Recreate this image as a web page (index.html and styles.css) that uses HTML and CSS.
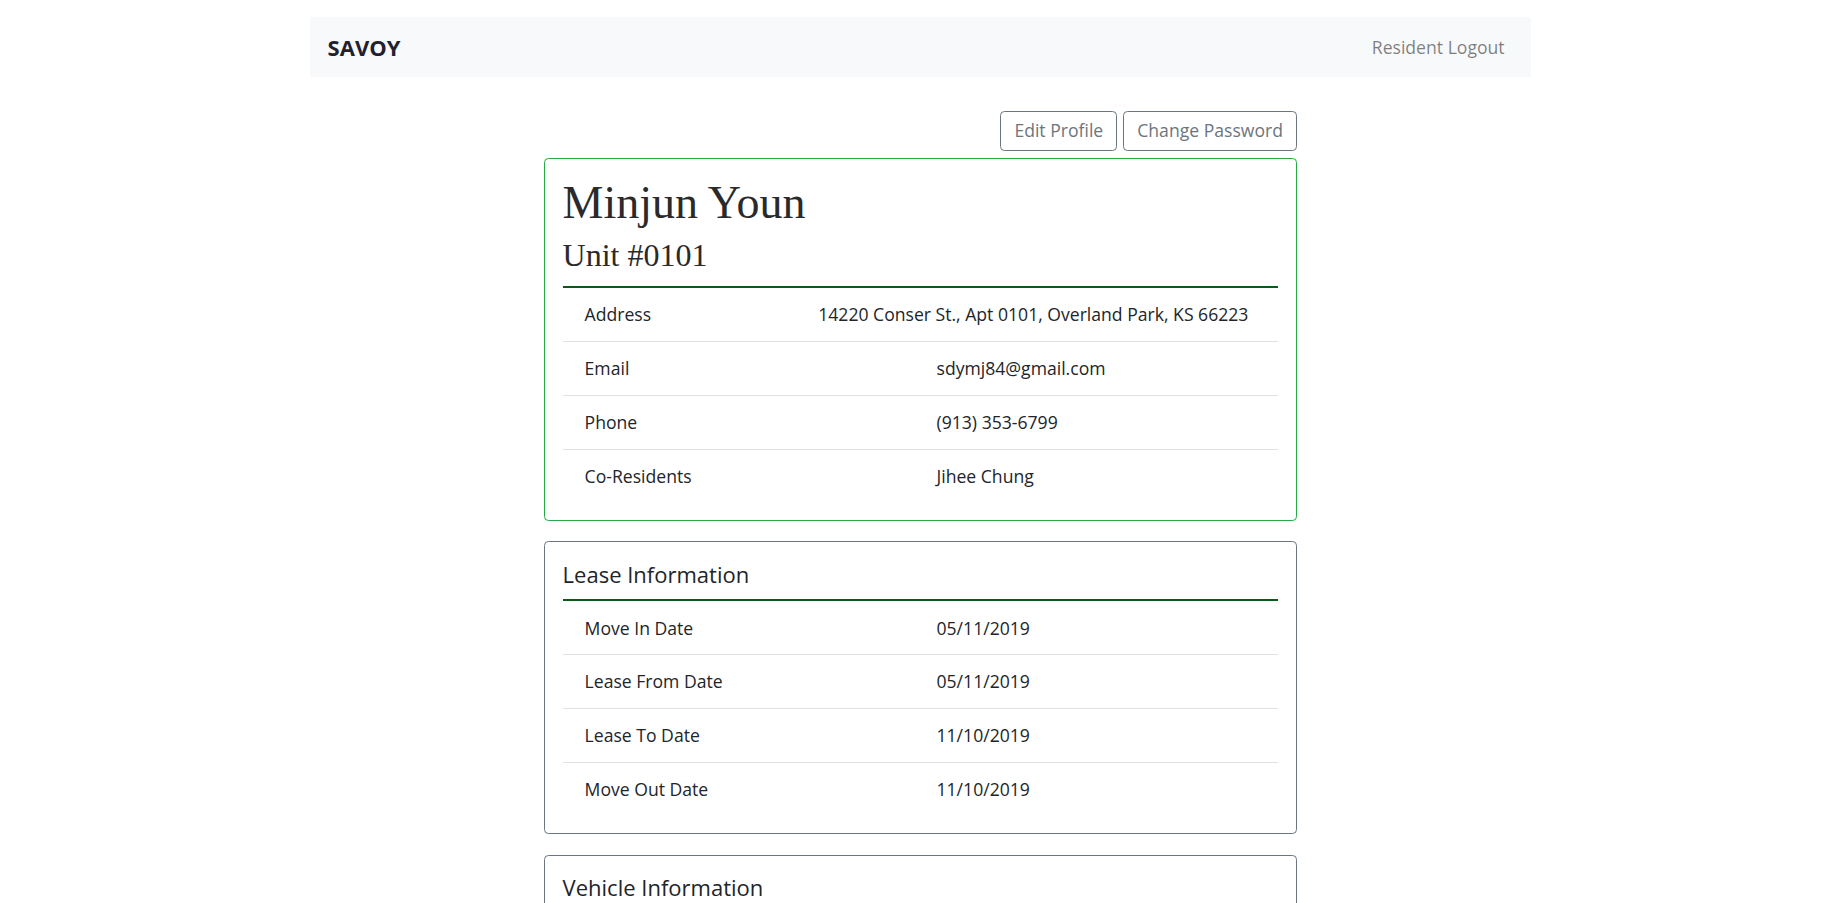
FILE: index.html
```html
<!DOCTYPE html>
<html lang="en">
<head>
<meta charset="utf-8">
<title>Savoy - Resident Profile</title>
<link rel="stylesheet" href="styles.css">
</head>
<body>
<div class="container">
  <header class="navbar">
    <span class="brand">SAVOY</span>
    <a class="nav-link" href="#">Resident Logout</a>
  </header>

  <main class="profile">
    <div class="actions">
      <button class="btn" type="button">Edit Profile</button>
      <button class="btn" type="button">Change Password</button>
    </div>

    <section class="card card-success">
      <h1 class="name">Minjun Youn</h1>
      <h2 class="unit">Unit #0101</h2>
      <div class="rule"></div>
      <div class="rows">
        <div class="row"><div class="label">Address</div><div class="value">14220 Conser St., Apt 0101, Overland Park, KS 66223</div></div>
        <div class="row"><div class="label">Email</div><div class="value">sdymj84@gmail.com</div></div>
        <div class="row"><div class="label">Phone</div><div class="value">(913) 353-6799</div></div>
        <div class="row"><div class="label">Co-Residents</div><div class="value">Jihee Chung</div></div>
      </div>
    </section>

    <section class="card">
      <h3 class="card-title">Lease Information</h3>
      <div class="rule"></div>
      <div class="rows">
        <div class="row"><div class="label">Move In Date</div><div class="value">05/11/2019</div></div>
        <div class="row"><div class="label">Lease From Date</div><div class="value">05/11/2019</div></div>
        <div class="row"><div class="label">Lease To Date</div><div class="value">11/10/2019</div></div>
        <div class="row"><div class="label">Move Out Date</div><div class="value">11/10/2019</div></div>
      </div>
    </section>

    <section class="card">
      <h3 class="card-title">Vehicle Information</h3>
      <div class="rule"></div>
    </section>
  </main>
</div>
</body>
</html>
```

FILE: styles.css
```css
* {
  box-sizing: border-box;
}

html, body {
  margin: 0;
  padding: 0;
  background: #ffffff;
}

body {
  font-family: "Open Sans", "Liberation Sans", sans-serif;
  font-size: 17.6px;
  line-height: 26.4px;
  color: #212529;
}

.container {
  width: 1221px;
  margin: 17px auto 0;
}

.navbar {
  display: flex;
  align-items: center;
  justify-content: space-between;
  height: 60px;
  padding: 0 17.6px;
  background: #f8f9fa;
}

.brand {
  font-size: 22px;
  font-weight: 700;
  line-height: 33px;
  color: #231f2e;
}

.nav-link {
  padding: 0 8.8px;
  color: rgba(0, 0, 0, 0.5);
  text-decoration: none;
}

.profile {
  width: 753px;
  margin: 0 auto;
}

.actions {
  display: flex;
  justify-content: flex-end;
  gap: 6px;
  margin-top: 33.6px;
  margin-bottom: 7px;
}

.btn {
  font-family: inherit;
  font-size: 17.6px;
  line-height: 25px;
  padding: 6.5px 13px;
  color: #6c757d;
  background: transparent;
  border: 1px solid #6c757d;
  border-radius: 4.4px;
  cursor: pointer;
}

.card {
  border: 1px solid #6c757d;
  border-radius: 4.4px;
  padding: 17.6px;
  margin-bottom: 20.5px;
}

.card-success {
  border-color: #28a745;
}

.name {
  margin: 0;
  font-family: "Liberation Serif", "DejaVu Serif", serif;
  font-weight: 400;
  font-size: 46px;
  line-height: 54px;
  color: #2a2a2a;
}

.unit {
  margin: 6px 0 0;
  font-family: "Liberation Serif", "DejaVu Serif", serif;
  font-weight: 400;
  font-size: 32px;
  line-height: 38px;
  color: #2a2a2a;
}

.card-title {
  margin: 1px 0 0;
  font-size: 22px;
  font-weight: 400;
  line-height: 26.4px;
  color: #212529;
}

.rule {
  height: 2px;
  margin-top: 12px;
  background: #0a5a18;
}

.row {
  display: flex;
  border-top: 1px solid #dee2e6;
}

.row:first-child {
  border-top: 0;
}

.label {
  flex: 1 1 0;
  padding: 13.2px 24px 13.2px 22px;
}

.value {
  flex: 1 1 0;
  padding: 13.2px 30px 13.2px 16px;
  white-space: nowrap;
}
```
